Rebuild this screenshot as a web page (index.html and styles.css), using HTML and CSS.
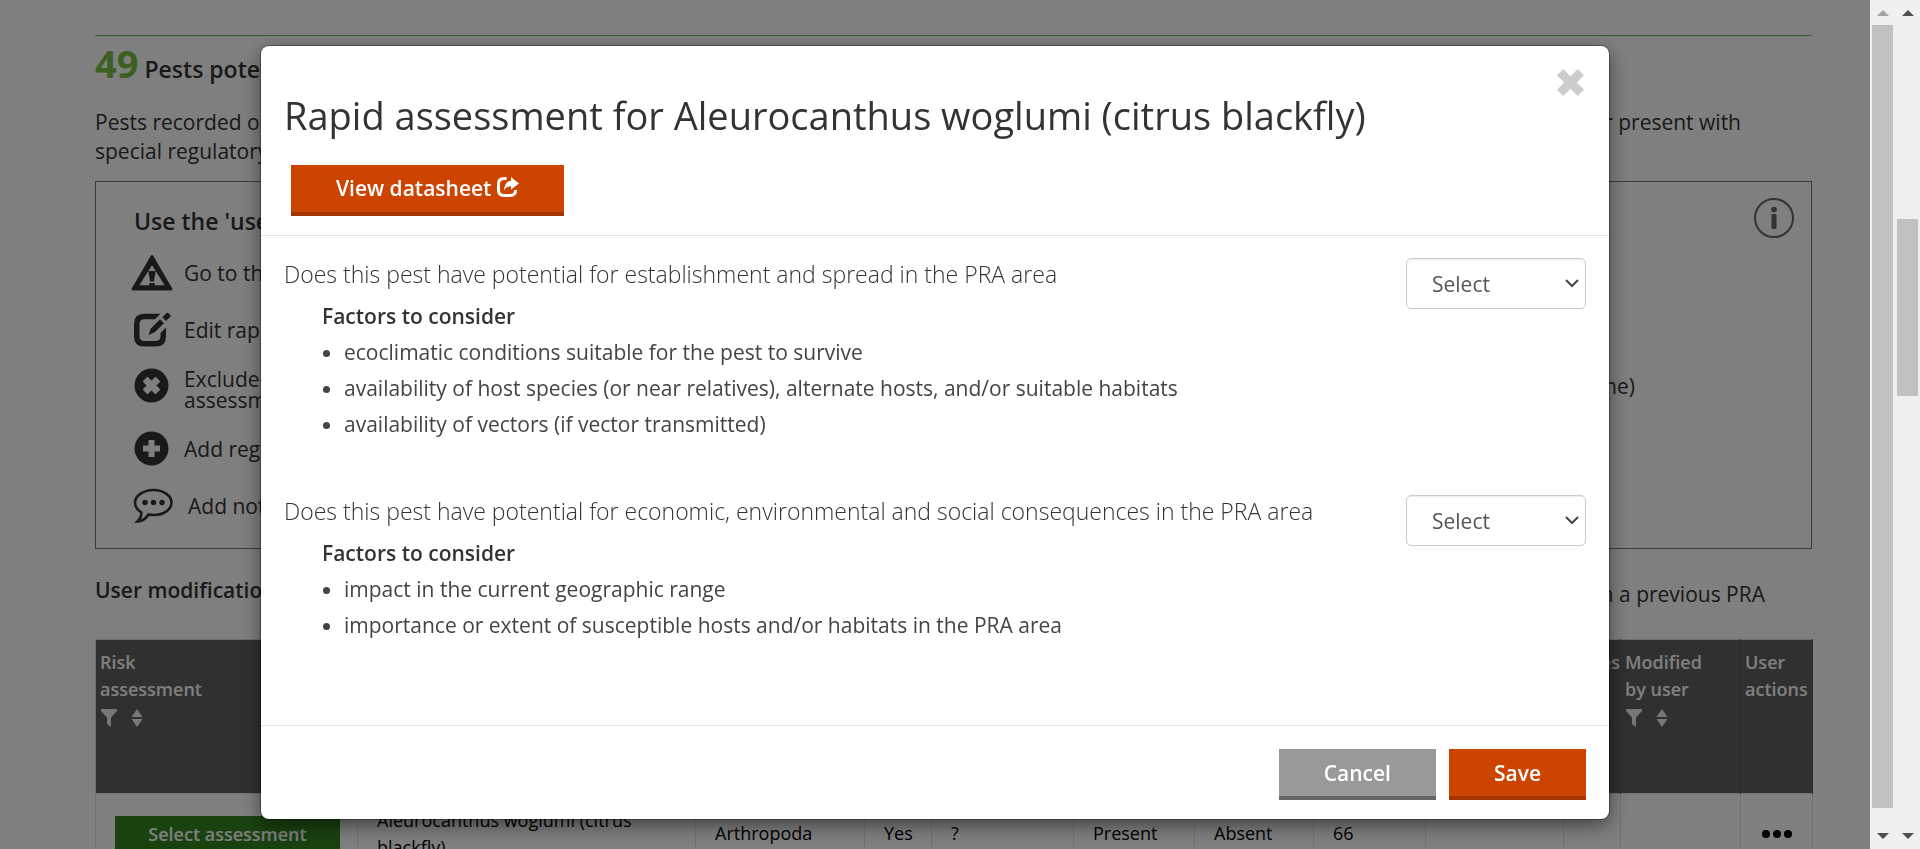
FILE: index.html
```html
<!DOCTYPE html>
<html lang="en">
<head>
<meta charset="utf-8">
<title>Pest risk analysis</title>
<link rel="stylesheet" href="styles.css">
</head>
<body>
<svg class="defs" aria-hidden="true">
  <symbol id="filter" viewBox="0 0 16 18"><path d="M0 0h16v2l-6 6.500V18l-4-3V8.500L0 2z"/></symbol>
  <symbol id="sort" viewBox="0 0 12 18"><path d="M6 0l5.500 8H.5zM6 18l5.500-8H.5z"/></symbol>
</svg>
<div class="screen">
  <main class="page">
    <section class="content">
      <h2 class="count"><strong class="count-number">49</strong> Pests potentially</h2>
      <div class="intro">
        <div class="split"><span>Pests recorded on</span><span>or present with</span></div>
        <div>special regulatory status</div>
      </div>
      <section class="legend">
        <div class="legend-head">
          <h3 class="legend-title">Use the 'user actions'</h3>
          <svg class="info" viewBox="0 0 42 42"><circle cx="21" cy="21" r="19" fill="none" stroke="currentColor" stroke-width="2"/><circle cx="21" cy="12.500" r="2.800" fill="currentColor"/><rect x="18.500" y="17" width="5" height="15" rx="1" fill="currentColor"/></svg>
        </div>
        <ul class="legend-list">
          <li class="legend-item"><svg class="legend-icon" viewBox="0 0 42 36"><path fill-rule="evenodd" d="M19.500 1.200q1.500-2.200 3 0L41.300 33.500q.7 2-1.300 2H2q-2 0-1.300-2zM21 10.200L8.300 30.300h25.400z"/><path d="M17.300 16h7.400l-1.800 10.500h-3.800zM18.300 28h5.400v3.500h-5.400z"/></svg><span>Go to the datasheet</span></li>
          <li class="legend-item legend-item-edit"><svg class="legend-icon" viewBox="0 0 42 36"><path d="M29.500 1.800H13Q3 1.800 3 11.800V24.500q0 10 10 10h12q10 0 10-10V15.500l-5.500 5.500v3q0 5-5 5H13.500q-5 0-5-5V12.300q0-5 5-5h10.500z"/><path d="M17.500 23l2.300-6.500L29 7.300l4 4-9.300 9zM31.300 5.300L35.500 1q1-.8 2 .2l1.600 1.600q1 1 .2 2L35 9z"/></svg><span>Edit rapid assessment</span></li>
          <li class="legend-item legend-item-exclude"><svg class="legend-icon" viewBox="0 0 42 36"><circle cx="20.500" cy="17.500" r="17"/><path d="M16.500 10l4 4 4-4 3.500 3.500-4 4 4 4-3.500 3.500-4-4-4 4-3.500-3.500 4-4-4-4z" fill="#fff" stroke="#fff" stroke-width="2" stroke-linejoin="round"/></svg><span class="legend-two">Excluded from<br>assessment</span><span class="legend-end">(name)</span></li>
          <li class="legend-item legend-item-add"><svg class="legend-icon" viewBox="0 0 42 36"><circle cx="20.500" cy="17.500" r="17"/><path d="M17.500 9h6v5.500H29v6h-5.500V26h-6v-5.500H12v-6h5.500z" fill="#fff"/></svg><span>Add regulatory</span></li>
          <li class="legend-item legend-item-note"><svg class="legend-icon" viewBox="0 0 42 36"><path d="M22.500 2C32 2 40.500 7.500 40.500 14.500S33 27 22.500 27q-2.500 0-5-.5-4 6.500-11 7 4-4 3.800-9Q4 20.500 4 14.500C4 7.500 13 2 22.500 2z" fill="none" stroke="currentColor" stroke-width="2.600"/><circle cx="14" cy="14.500" r="2.700"/><circle cx="22.500" cy="14.500" r="2.700"/><circle cx="31" cy="14.500" r="2.700"/></svg><span class="legend-note">Add notes</span></li>
        </ul>
      </section>
      <div class="split modifications"><h3 class="mod-title">User modifications</h3><span class="mod-end">from a previous PRA</span></div>
      <table class="pests">
        <colgroup><col class="c1"><col class="c2"><col class="c3"><col class="c4"><col class="c5"><col class="c6"><col class="c7"><col class="c8"><col class="c9"><col class="c10"><col class="c11"><col class="c12"></colgroup>
        <thead>
          <tr>
            <th>Risk<br>assessment<span class="tools"><svg class="i-filter"><use href="#filter"/></svg><svg class="i-sort"><use href="#sort"/></svg></span></th>
            <th></th><th></th><th></th><th></th><th></th><th></th><th></th><th></th>
            <th class="right">Notes</th>
            <th>Modified<br>by user<span class="tools"><svg class="i-filter"><use href="#filter"/></svg><svg class="i-sort"><use href="#sort"/></svg></span></th>
            <th>User<br>actions</th>
          </tr>
        </thead>
        <tbody>
          <tr>
            <td><button class="assess" type="button">Select assessment</button></td>
            <td>Aleurocanthus woglumi (citrus blackfly)</td>
            <td>Arthropoda</td><td>Yes</td><td>?</td><td>Present</td><td>Absent</td><td>66</td><td></td><td></td><td></td>
            <td class="more"><button class="dots" type="button" aria-label="User actions"><i></i><i></i><i></i></button></td>
          </tr>
        </tbody>
      </table>
    </section>
  </main>
  <div class="bar"><svg class="arrow arrow-off" viewBox="0 0 12 6"><path d="M6 0l6 6H0z"/></svg><div class="track"><div class="thumb"></div></div><svg class="arrow" viewBox="0 0 12 6"><path d="M6 6l6-6H0z"/></svg></div>
  <div class="bar"><svg class="arrow" viewBox="0 0 12 6"><path d="M6 0l6 6H0z"/></svg><div class="track track-outer"><div class="thumb"></div></div><svg class="arrow" viewBox="0 0 12 6"><path d="M6 6l6-6H0z"/></svg></div>
</div>

<div class="backdrop">
  <div class="modal" role="dialog" aria-modal="true" aria-labelledby="modal-title">
    <header class="modal-header">
      <button class="close" type="button" aria-label="Close"><svg viewBox="0 0 26 26"><path d="M6 0l7 7 7-7 6 6-7 7 7 7-6 6-7-7-7 7-6-6 7-7-7-7z"/></svg></button>
      <h1 class="modal-title" id="modal-title">Rapid assessment for Aleurocanthus woglumi (citrus blackfly)</h1>
      <a class="btn btn-link" href="#datasheet">View datasheet <svg class="share" viewBox="0 0 22 20"><path d="M9.500 1.500H7q-5.500 0-5.500 5.500v6q0 5.500 5.500 5.500h6q5.500 0 5.500-5V13" fill="none" stroke="currentColor" stroke-width="3"/><path d="M14 0l8 6.500-8 6V9.200q-4.500 0-7 4.300Q7.500 4.500 14 3.800z" fill="currentColor"/></svg></a>
    </header>
    <div class="modal-body">
      <section class="question">
        <div class="question-text">
          <label class="question-label" for="q1">Does this pest have potential for establishment and spread in the PRA area</label>
          <div class="factors">
            <h4 class="factors-title">Factors to consider</h4>
            <ul class="factor-list">
              <li>ecoclimatic conditions suitable for the pest to survive</li>
              <li>availability of host species (or near relatives), alternate hosts, and/or suitable habitats</li>
              <li>availability of vectors (if vector transmitted)</li>
            </ul>
          </div>
        </div>
        <div class="select-wrap"><select class="select" id="q1"><option>Select</option></select><svg class="chevron" viewBox="0 0 14 9"><path d="M1 1l6 6 6-6"/></svg></div>
      </section>
      <section class="question">
        <div class="question-text">
          <label class="question-label" for="q2">Does this pest have potential for economic, environmental and social consequences in the PRA area</label>
          <div class="factors">
            <h4 class="factors-title">Factors to consider</h4>
            <ul class="factor-list">
              <li>impact in the current geographic range</li>
              <li>importance or extent of susceptible hosts and/or habitats in the PRA area</li>
            </ul>
          </div>
        </div>
        <div class="select-wrap"><select class="select" id="q2"><option>Select</option></select><svg class="chevron" viewBox="0 0 14 9"><path d="M1 1l6 6 6-6"/></svg></div>
      </section>
    </div>
    <footer class="modal-footer">
      <button class="btn btn-cancel" type="button">Cancel</button>
      <button class="btn" type="button">Save</button>
    </footer>
  </div>
</div>
</body>
</html>
```
FILE: styles.css
```css
* { box-sizing: border-box; }
body {
  margin: 0;
  height: 100vh;
  overflow: hidden;
  background: #fff;
  color: #333;
  font: 400 21px/29px "Open Sans", sans-serif;
}
h1, h2, h3, h4, ul { margin: 0; padding: 0; font-weight: inherit; }
button, select { font-family: inherit; }
.defs { position: absolute; width: 0; height: 0; }

.screen { display: flex; height: 100vh; overflow: hidden; }
.page { flex: 1; min-width: 0; padding: 35px 58px 0 95px; }
.content { border-top: 1px solid #76c043; }
.split { display: flex; justify-content: space-between; padding-right: 71px; }

/* Result heading */
.count { font-size: 23px; line-height: 54px; font-weight: 600; }
.count-number { color: #76c043; font-size: 38px; font-weight: 700; }
.intro { margin-top: 12px; }

/* Legend box */
.legend {
  height: 368px;
  margin-top: 15px;
  padding: 15px 16px 0 35px;
  border: 1px solid #777;
}
.legend-head { display: flex; justify-content: space-between; }
.legend-title { padding: 6px 0 0 3px; font-size: 23px; line-height: 36px; font-weight: 600; color: #333; }
.info { width: 42px; height: 42px; color: #666; }
.legend-list { list-style: none; padding-top: 6px; }
.legend-item { display: flex; align-items: center; gap: 11px; height: 56px; }
.legend-item-edit { height: 58px; }
.legend-item-exclude { height: 54px; }
.legend-item-add { height: 72px; }
.legend-item-note { height: 42px; }
.legend-icon { width: 42px; height: 36px; fill: currentColor; flex: none; }
.legend-two { padding-top: 8px; line-height: 21px; }
.legend-end { margin-left: auto; padding-right: 160px; }
.legend-note { padding-left: 4px; }

.modifications { align-items: flex-end; padding: 23px 47px 0 0; }
.mod-title { font-size: 21px; line-height: 37px; font-weight: 600; }
.mod-end { line-height: 29px; }

/* Table */
.pests {
  width: 100%;
  margin-top: 30px;
  table-layout: fixed;
  border-collapse: collapse;
  border: 1px solid #ddd;
  font-size: 18px;
  line-height: 27px;
}
.c1 { width: 262px; } .c2 { width: 338px; } .c3 { width: 169px; } .c4 { width: 67px; }
.c5 { width: 142px; } .c6 { width: 121px; } .c7 { width: 119px; } .c8 { width: 112px; }
.c9 { width: 138px; } .c10 { width: 57px; } .c11 { width: 120px; } .c12 { width: 72px; }
.pests th {
  height: 154px;
  padding: 9px 0 0 4px;
  vertical-align: top;
  text-align: left;
  font-weight: 600;
  color: #fff;
  background: #606060;
  border-right: 1px solid #585858;
}
.pests .right { text-align: right; }
.tools { display: flex; gap: 14px; padding: 6px 0 0 1px; }
.i-filter { width: 16px; height: 18px; fill: #eee; }
.i-sort { width: 12px; height: 18px; fill: #eee; }
.pests td { height: 80px; padding: 0 19px; border: 1px solid #e4e4e4; color: #000; }
.assess {
  width: 225px;
  height: 36px;
  padding: 0;
  border: 0;
  background: #34851f;
  color: #fff;
  font-size: 18px;
  font-weight: 600;
}
.pests .more { padding: 0; text-align: center; }
.dots { display: inline-flex; gap: 3px; padding: 0 0 12px; border: 0; background: none; }
.dots i { width: 8px; height: 8px; border-radius: 50%; background: #000; }

/* Scroll bars */
.bar {
  position: relative;
  z-index: 3;
  display: flex;
  flex-direction: column;
  align-items: center;
  width: 25px;
  padding: 10px 0;
  background: #f0f0f0;
}
.arrow { width: 12px; height: 6px; fill: #505050; }
.arrow-off { fill: #a3a3a3; }
.track { display: flex; flex: 1; width: 21px; margin: 9px 0 25px; }
.track-outer { padding: 194px 0 412px; }
.thumb { flex: 1; background: #c1c1c1; }

/* Modal */
.backdrop {
  position: fixed;
  inset: 0 50px 0 0;
  z-index: 2;
  padding: 46px 0 0 0;
  background: rgba(0, 0, 0, 0.5);
}
.modal {
  width: 72%;
  min-width: 1348px;
  margin: 0 auto;
  border-radius: 8px;
  background: #fff;
  box-shadow: 0 0 0 1px rgba(0, 0, 0, 0.3), 0 6px 19px rgba(0, 0, 0, 0.5);
}
.modal-header { position: relative; height: 190px; padding: 42px 23px 0; border-bottom: 1px solid #e5e5e5; }
.close { position: absolute; top: 23px; right: 25px; width: 27px; height: 27px; padding: 0; border: 0; background: none; }
.close svg { display: block; fill: #ccc; }
.modal-title { font-size: 38px; line-height: 54px; }
.btn {
  display: inline-block;
  height: 51px;
  padding: 0 45px;
  border: 0;
  border-bottom: 4px solid #a33600;
  background: #cc4400;
  color: #fff;
  font-size: 21px;
  line-height: 46px;
  font-weight: 600;
  text-decoration: none;
}
.btn-link { margin: 23px 0 0 7px; }
.btn-cancel { background: #999; border-bottom-color: #666; }
.share { width: 22px; height: 20px; vertical-align: -1px; }
.modal-body { padding: 22px 23px 0; }
.question { display: flex; justify-content: space-between; height: 237px; }
.question-label { display: block; font-size: 23px; line-height: 32px; font-weight: 300; }
.factors { padding: 8px 0 0 38px; }
.factors-title { font-weight: 600; line-height: 36px; }
.factor-list { padding-left: 22px; line-height: 36px; color: #444; }
.select-wrap { position: relative; width: 180px; height: 51px; }
.select {
  width: 100%;
  height: 100%;
  padding: 0 25px;
  appearance: none;
  border: 1px solid #ccc;
  border-radius: 5px;
  background: #fff;
  box-shadow: inset 0 1px 1px rgba(0, 0, 0, 0.08);
  color: #555;
  font-size: 21px;
  font-weight: 400;
}
.chevron { position: absolute; top: 21px; right: 7px; width: 14px; height: 9px; fill: none; stroke: #444; stroke-width: 2; pointer-events: none; }
.modal-footer {
  display: flex;
  justify-content: flex-end;
  gap: 13px;
  margin-top: -7px;
  padding: 23px 23px 19px;
  border-top: 1px solid #e5e5e5;
}
```
